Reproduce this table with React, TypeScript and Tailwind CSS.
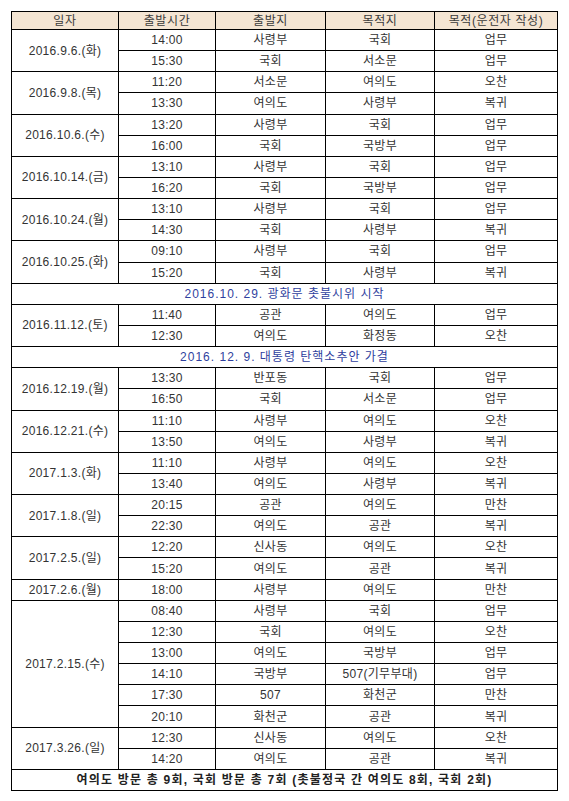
type Trip = [string, string, string, string];
type Group = { date: string; trips: Trip[] } | { note: string };

const data: Group[] = [
  { date: "2016.9.6.(화)", trips: [["14:00", "사령부", "국회", "업무"], ["15:30", "국회", "서소문", "업무"]] },
  { date: "2016.9.8.(목)", trips: [["11:20", "서소문", "여의도", "오찬"], ["13:30", "여의도", "사령부", "복귀"]] },
  { date: "2016.10.6.(수)", trips: [["13:20", "사령부", "국회", "업무"], ["16:00", "국회", "국방부", "업무"]] },
  { date: "2016.10.14.(금)", trips: [["13:10", "사령부", "국회", "업무"], ["16:20", "국회", "국방부", "업무"]] },
  { date: "2016.10.24.(월)", trips: [["13:10", "사령부", "국회", "업무"], ["14:30", "국회", "사령부", "복귀"]] },
  { date: "2016.10.25.(화)", trips: [["09:10", "사령부", "국회", "업무"], ["15:20", "국회", "사령부", "복귀"]] },
  { note: "2016.10. 29. 광화문 촛불시위 시작" },
  { date: "2016.11.12.(토)", trips: [["11:40", "공관", "여의도", "업무"], ["12:30", "여의도", "화정동", "오찬"]] },
  { note: "2016. 12. 9. 대통령 탄핵소추안 가결" },
  { date: "2016.12.19.(월)", trips: [["13:30", "반포동", "국회", "업무"], ["16:50", "국회", "서소문", "업무"]] },
  { date: "2016.12.21.(수)", trips: [["11:10", "사령부", "여의도", "오찬"], ["13:50", "여의도", "사령부", "복귀"]] },
  { date: "2017.1.3.(화)", trips: [["11:10", "사령부", "여의도", "오찬"], ["13:40", "여의도", "사령부", "복귀"]] },
  { date: "2017.1.8.(일)", trips: [["20:15", "공관", "여의도", "만찬"], ["22:30", "여의도", "공관", "복귀"]] },
  { date: "2017.2.5.(일)", trips: [["12:20", "신사동", "여의도", "오찬"], ["15:20", "여의도", "공관", "복귀"]] },
  { date: "2017.2.6.(월)", trips: [["18:00", "사령부", "여의도", "만찬"]] },
  {
    date: "2017.2.15.(수)",
    trips: [
      ["08:40", "사령부", "국회", "업무"],
      ["12:30", "국회", "여의도", "오찬"],
      ["13:00", "여의도", "국방부", "업무"],
      ["14:10", "국방부", "507(기무부대)", "업무"],
      ["17:30", "507", "화천군", "만찬"],
      ["20:10", "화천군", "공관", "복귀"],
    ],
  },
  { date: "2017.3.26.(일)", trips: [["12:30", "신사동", "여의도", "오찬"], ["14:20", "여의도", "공관", "복귀"]] },
];

const spans: Record<number, string> = { 1: "row-span-1", 2: "row-span-2", 6: "row-span-6" };

const cell = "bg-white flex items-center justify-center";

export default function App() {
  return (
    <div className="min-h-[801px] bg-white pl-[11px] pt-[11px] font-['Liberation_Sans','Noto_Sans_CJK_KR',sans-serif] text-[12px] tracking-[0.3px] text-[#333]">
      <div className="grid h-[780px] w-[547px] grid-cols-[106px_96px_109px_108px_122px] grid-rows-[17px_repeat(36,1fr)] gap-px bg-black p-px">
        {["일자", "출발시간", "출발지", "목적지", "목적(운전자 작성)"].map((h) => (
          <div key={h} className="flex items-center justify-center bg-[#f4e5d3] tracking-[0.6px] text-[#3a3a3a]">
            {h}
          </div>
        ))}

        {data.map((g, i) =>
          "note" in g ? (
            <div key={i} className={`${cell} col-span-5 tracking-[1px] text-[#2f3f9e]`}>
              {g.note}
            </div>
          ) : (
            [
              <div key={`${i}-d`} className={`${cell} ${spans[g.trips.length]}`}>
                {g.date}
              </div>,
              ...g.trips.flatMap((t, j) =>
                t.map((v, k) => (
                  <div key={`${i}-${j}-${k}`} className={cell}>
                    {v}
                  </div>
                ))
              ),
            ]
          )
        )}

        <div className={`${cell} col-span-5 font-semibold tracking-[1.2px] text-[#222]`}>
          여의도 방문 총 9회, 국회 방문 총 7회 (촛불정국 간 여의도 8회, 국회 2회)
        </div>
      </div>
    </div>
  );
}
